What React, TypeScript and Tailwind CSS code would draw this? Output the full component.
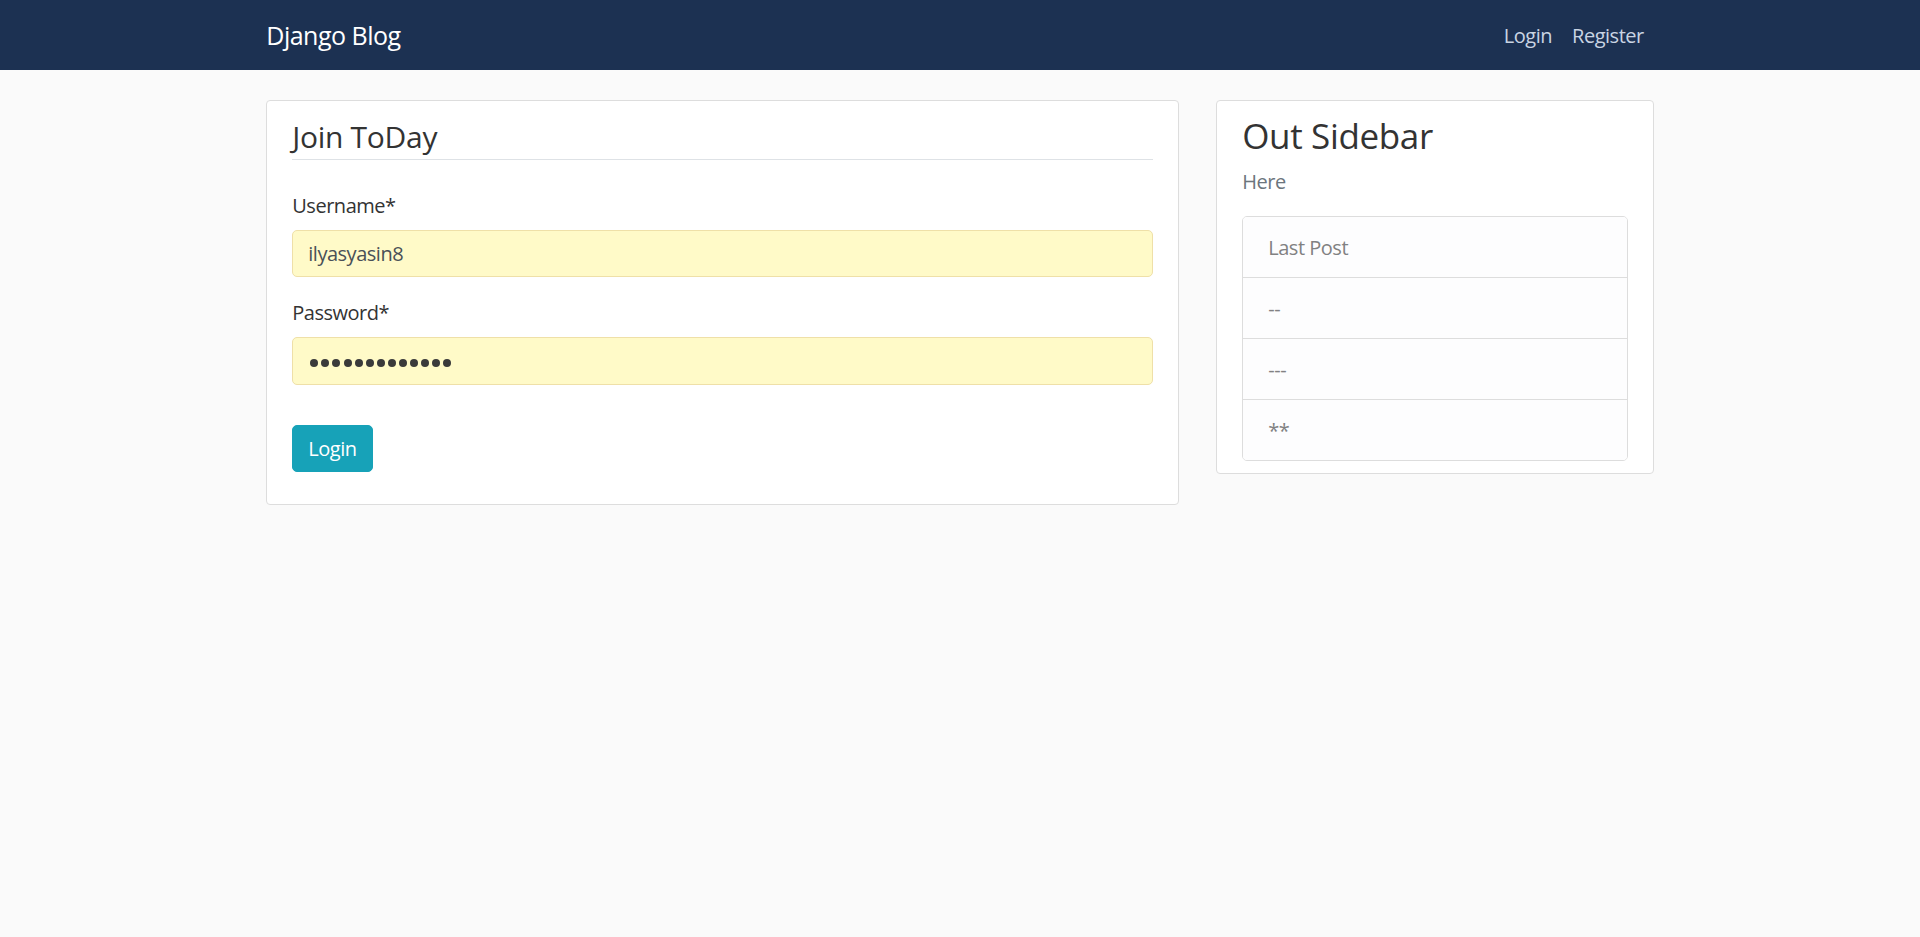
import React from "react";

export default function App() {
  const items = ["Last Post", "--", "---", "**"];
  return (
    <div className="min-h-screen bg-[#fafafa] text-[#333333] font-['Open_Sans',sans-serif] tracking-[-0.03em]">
      <header className="h-[70px] bg-[#1c3152]">
        <div className="mx-auto flex h-full w-[1425px] items-center justify-between px-[18.75px] pt-[2px]">
          <span className="text-[25px] leading-[37.5px] tracking-[-0.02em] text-white">Django Blog</span>
          <nav className="flex">
            <a className="px-[10px] text-[20px] leading-[30px] text-[#c9d4e3]">Login</a>
            <a className="px-[10px] text-[20px] leading-[30px] text-[#c9d4e3]">Register</a>
          </nav>
        </div>
      </header>
      <main className="mx-auto flex w-[1425px] items-start gap-[37.5px] px-[18.75px] pt-[30px]">
        <section className="w-[912.5px] rounded-[4px] border border-[#dddddd] bg-white px-[25px] py-[12.5px]">
          <div className="mb-[30px] border-b border-[#dee2e6] pt-[1px] text-[30px] leading-[44px] tracking-[-0.01em]">Join ToDay</div>
          <div className="mb-[20px]">
            <label className="mb-[10px] block pt-[1px] text-[20px] leading-[29px]">Username*</label>
            <div className="flex h-[47.5px] items-center rounded-[5px] border border-[#efe0a8] bg-[#fffac8] px-[15px] pt-[1px] text-[20px] text-[#495057]">
              ilyasyasin8
            </div>
          </div>
          <div className="mb-[40px]">
            <label className="mb-[10px] block pt-[1px] text-[20px] leading-[29px]">Password*</label>
            <div className="flex h-[47.5px] items-center gap-[3.1px] rounded-[5px] border border-[#efe0a8] bg-[#fffac8] pl-[17px] pr-[15px] pt-[5px]">
              {Array.from({ length: 13 }).map((_, i) => (
                <span key={i} className="block h-[8px] w-[8px] rounded-full bg-[#3a3a3a]" />
              ))}
            </div>
          </div>
          <div className="mb-[20px]">
            <button className="rounded-[5px] border border-[#17a2b8] bg-[#17a2b8] px-[15px] pb-[6.5px] pt-[8.5px] text-[20px] leading-[30px] text-white">
              Login
            </button>
          </div>
        </section>
        <aside className="w-[437.5px] rounded-[4px] border border-[#dddddd] bg-white px-[25px] py-[12.5px]">
          <h3 className="mb-[10px] pt-[1px] text-[35px] leading-[41px] tracking-[-0.01em]">Out Sidebar</h3>
          <p className="mb-[20px] pt-[1px] text-[20px] leading-[29px] text-[#6c757d]">Here</p>
          <ul className="overflow-hidden rounded-[5px] border border-[#dddddd]">
            {items.map((t, i) => (
              <li
                key={t}
                className={`bg-[#fdfdfe] px-[25px] pb-[14px] pt-[16px] text-[20px] leading-[30px] text-[#818182] ${i > 0 ? "border-t border-[#dddddd]" : ""}`}
              >
                {t}
              </li>
            ))}
          </ul>
        </aside>
      </main>
    </div>
  );
}
